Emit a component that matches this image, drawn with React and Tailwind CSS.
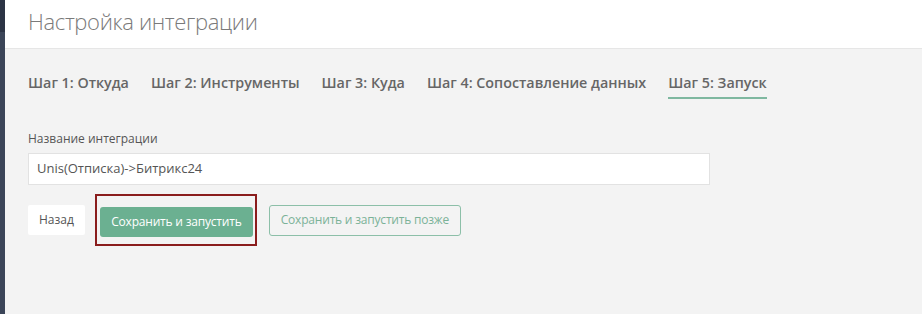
import React from "react";

const tabs = [
  "Шаг 1: Откуда",
  "Шаг 2: Инструменты",
  "Шаг 3: Куда",
  "Шаг 4: Сопоставление данных",
  "Шаг 5: Запуск",
];

export default function App() {
  return (
    <div
      className="flex w-[922px] h-[314px] overflow-hidden bg-[#f3f3f3]"
      style={{ fontFamily: '"Open Sans", "Noto Sans", sans-serif' }}
    >
      <div className="w-[5px] shrink-0 flex flex-col">
        <div className="h-[32px] bg-[#2c3445]" />
        <div className="flex-1 bg-[#3b4558]" />
      </div>
      <div className="flex-1 flex flex-col">
        <div className="h-[49px] bg-white border-b border-[#e6e6e6] pl-[23px] flex items-center">
          <h1 className="text-[22px] font-light tracking-[-0.35px] text-[#7a7a7a] leading-none -mt-[6px]">
            Настройка интеграции
          </h1>
        </div>
        <div className="pl-[23px] pt-[24px] flex gap-[22px]">
          {tabs.map((t, i) => (
            <div
              key={t}
              className={
                "text-[14.3px] font-semibold text-[#666] pb-[5px] leading-[19px] " +
                (i === 4 ? "border-b-2 border-[#7fb8a0]" : "border-b-2 border-transparent")
              }
            >
              {t}
            </div>
          ))}
        </div>
        <div className="pl-[23px] pt-[32px]">
          <div className="text-[12px] text-[#555] leading-[16px]">Название интеграции</div>
          <div className="mt-[6px] w-[682px] h-[32px] bg-white border border-[#e2e2e2] flex items-center pl-[8px] text-[13px] text-[#555]">
            Unis(Отписка)-&gt;Битрикс24
          </div>
          <div className="mt-[9px] flex items-center">
            <button className="h-[30px] px-[11px] bg-white rounded-[2px] text-[12px] text-[#555]">
              Назад
            </button>
            <div className="ml-[10px] border-2 border-[#8a1c1c] pl-[3px] pr-[2px] pt-[11px] pb-[7px]">
              <button className="h-[30px] w-[153px] bg-[#6bb091] rounded-[3px] text-[12px] text-white tracking-[-0.2px]">
                Сохранить и запустить
              </button>
            </div>
            <button className="ml-[12px] h-[31px] w-[192px] border border-[#8cbfa8] rounded-[3px] text-[12px] text-[#7bb298] tracking-[-0.2px]">
              Сохранить и запустить позже
            </button>
          </div>
        </div>
      </div>
    </div>
  );
}
